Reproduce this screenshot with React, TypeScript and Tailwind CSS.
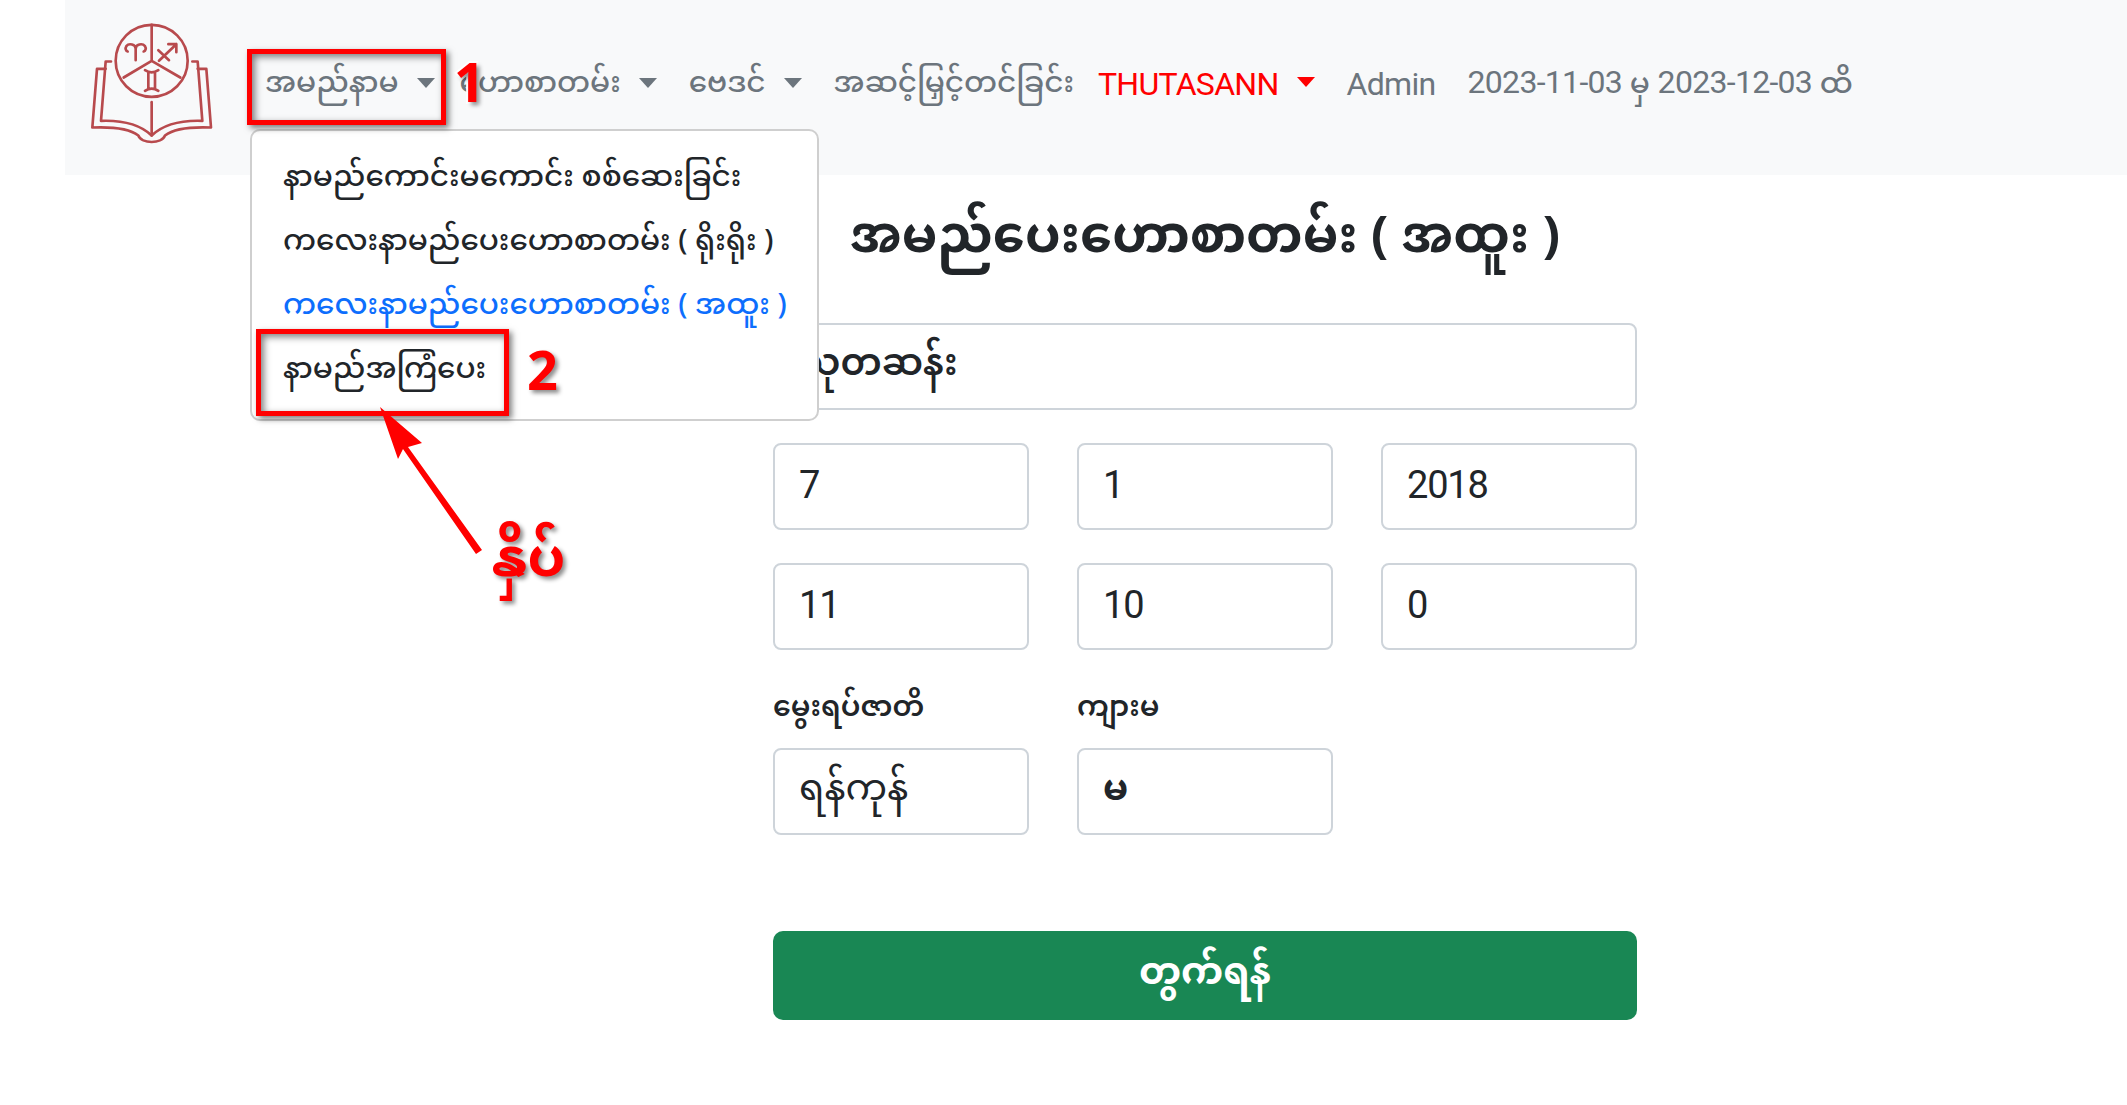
/** Myanmar horoscope form with the nav dropdown open and tutorial marks on top. */
const font = "[font-family:'Noto_Sans_Myanmar','Padauk','Myanmar_Text','Lato','Noto_Sans',sans-serif]";
const latin = "[font-family:'Roboto',sans-serif] font-normal";

const inputClass =
  "h-[87px] w-full rounded-[8px] border-2 border-[#ced4da] bg-white px-6 text-[#212529] outline-none";
const mmInput = `${inputClass} text-[37px] font-semibold`;
const numInput = `${inputClass} ${latin} pb-[3px] text-[38px] tracking-[-1.2px]`;
const navLatin = `${latin} text-[32px] tracking-[-0.7px]`;
const labelClass = "mb-[23px] block h-[30px] text-[28.5px] leading-[30px] font-semibold text-[#212529]";

function Caret({ red }: { red?: boolean }) {
  return (
    <span
      className={`mb-[4px] ml-[18px] inline-block h-0 w-0 border-x-[9px] border-t-[10px] border-x-transparent ${
        red ? "border-t-[#ff0000]" : "border-t-[#6c757d]"
      }`}
    />
  );
}

function Logo() {
  return (
    <svg viewBox="0 0 450 450" className="mt-[-3px] h-[153px] w-[150px] shrink-0" fill="none" stroke="#b84a4d" strokeWidth="8" strokeLinecap="round" strokeLinejoin="round">
      <circle cx="218" cy="148" r="108" />
      <path d="M218 40V148M218 148L134 198M218 148L304 198" />
      <path d="M170 146V112C170 98 150 94 142 104C138 110 140 118 146 120M170 112C170 98 190 94 198 104C202 110 200 118 194 120" />
      <path d="M238 116L270 146M240 148L292 98M268 98H292V122" />
      <path d="M198 176C210 184 226 184 238 176M198 238C210 230 226 230 238 238M208 182V232M228 182V232" />
      <path d="M218 272V372" />
      <path d="M96 150H80L66 328C120 326 180 336 218 372C256 336 316 326 370 328L356 150H340" />
      <path d="M80 172H54L40 348C90 346 150 350 178 372C188 398 248 398 258 372C286 350 346 346 396 348L382 172H356" />
    </svg>
  );
}

function RedBox({ className }: { className: string }) {
  return (
    <div
      className={`pointer-events-none absolute border-[5px] border-[#ff0000] shadow-[3px_3px_6px_rgba(0,0,0,0.5),inset_3px_3px_7px_rgba(0,0,0,0.5)] ${className}`}
    />
  );
}

const markText =
  "absolute font-bold text-[#ff0000] [-webkit-text-stroke:4px_white] [paint-order:stroke_fill] [text-shadow:3px_3px_4px_rgba(0,0,0,0.45)]";

const menuItem = "flex h-[64px] items-center px-[31px] whitespace-nowrap";

export default function App() {
  return (
    <div className={`relative h-[1105px] w-[2127px] overflow-hidden bg-white ${font}`}>
      <nav className="ml-[65px] flex h-[175px] items-center bg-[#f8f9fa] pl-[14px] text-[29.5px] font-medium text-[#6c757d]">
        <Logo />
        <div className="ml-[20px] flex items-center pb-[5px]">
          <a className="flex items-center pr-[9px] pl-4">အမည်နာမ<Caret /></a>
          <a className="flex items-center px-4">ဟောစာတမ်း<Caret /></a>
          <a className="flex items-center px-4">ဗေဒင်<Caret /></a>
          <a className="pr-[8px] pl-4">အဆင့်မြှင့်တင်ခြင်း</a>
          <a className={`flex items-center px-4 pb-[3px] text-[#ff0000] ${navLatin}`}>THUTASANN<Caret red /></a>
          <a className={`px-4 pb-[3px] ${navLatin}`}>Admin</a>
          <span className="px-4 pb-[3px]">
            <span className={navLatin}>2023-11-03</span> မှ{" "}
            <span className={navLatin}>2023-12-03</span> ထိ
          </span>
        </div>
      </nav>

      <main className="ml-[773px] w-[864px] pt-[41px]">
        <h1 className="flex h-[48px] items-center justify-center text-[51px] font-bold whitespace-nowrap text-[#212529]">
          အမည်ပေးဟောစာတမ်း ( အထူး )
        </h1>
        <input className={`${mmInput} mt-[59px] block`} defaultValue="သုတဆန်း" />
        <div className="mt-[33px] grid grid-cols-3 gap-x-[48px] gap-y-[33px]">
          <input className={numInput} defaultValue="7" />
          <input className={numInput} defaultValue="1" />
          <input className={numInput} defaultValue="2018" />
          <input className={numInput} defaultValue="11" />
          <input className={numInput} defaultValue="10" />
          <input className={numInput} defaultValue="0" />
          <div className="pt-[12px]">
            <label className={labelClass}>မွေးရပ်ဇာတိ</label>
            <input className={`${inputClass} text-[37px]`} defaultValue="ရန်ကုန်" />
          </div>
          <div className="pt-[12px]">
            <label className={labelClass}>ကျားမ</label>
            <input className={`${inputClass} text-[36px] font-bold`} defaultValue="မ" />
          </div>
        </div>
        <button className="mt-[96px] block h-[89px] w-full rounded-[10px] bg-[#198754] text-[38px] font-bold text-white">
          တွက်ရန်
        </button>
      </main>

      {/* open dropdown */}
      <div className="absolute top-[129px] left-[250px] w-[569px] rounded-[10px] border-2 border-[#cfcfcf] bg-white py-[16px] text-[29.5px] font-medium text-[#212529]">
        <div className={menuItem}>နာမည်ကောင်းမကောင်း စစ်ဆေးခြင်း</div>
        <div className={menuItem}>ကလေးနာမည်ပေးဟောစာတမ်း ( ရိုးရိုး )</div>
        <div className={`${menuItem} text-[#0d6efd]`}>ကလေးနာမည်ပေးဟောစာတမ်း ( အထူး )</div>
        <div className={menuItem}>နာမည်အကြံပေး</div>
      </div>

      <RedBox className="top-[49px] left-[247px] h-[76px] w-[199px]" />
      <RedBox className="top-[329px] left-[256px] h-[87px] w-[253px]" />
      <span className={`${markText} top-[60px] left-[454px] text-[54px] leading-[60px]`}>1</span>
      <span className={`${markText} top-[348px] left-[527px] text-[54px] leading-[60px]`}>2</span>
      <span className={`${markText} top-[524px] left-[492px] text-[54px] leading-[80px]`}>နှိပ်</span>

      <svg className="absolute top-0 left-0 h-[1105px] w-[2127px]" viewBox="0 0 2127 1105" fill="#ff0000">
        <path d="M380 407L422 443L408 447L482 550L476 554L403 449L398 459Z" />
      </svg>
    </div>
  );
}
